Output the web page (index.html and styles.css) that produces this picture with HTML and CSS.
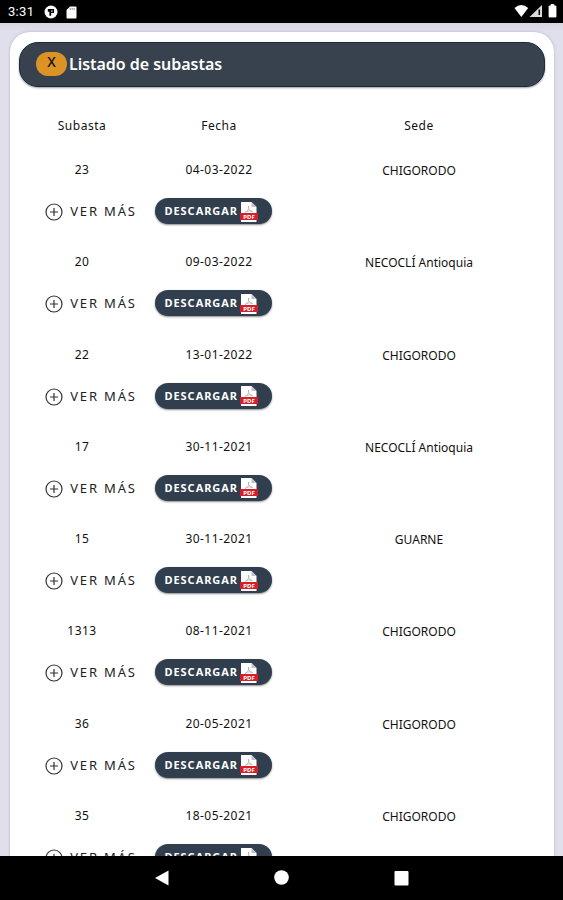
FILE: index.html
```html
<!DOCTYPE html>
<html lang="es">
<head>
<meta charset="utf-8">
<title>Listado de subastas</title>
<link rel="stylesheet" href="styles.css">
</head>
<body>
<header class="status">
  <span class="clock">3:31</span>
  <svg class="app" width="14" height="14" viewBox="0 0 14 14"><circle cx="7" cy="7" r="6.500" fill="#fff"/><path d="M3.800 4H10V8H7.200V10.800H5.400V6.800H3.800Z" fill="#000"/><path d="M7.200 5.400h1.400v1.300H7.200Z" fill="#fff"/></svg>
  <svg class="sd" width="11" height="13" viewBox="0 0 11 13"><path d="M4 0.500H9.500a1 1 0 0 1 1 1V11.500a1 1 0 0 1-1 1H1.500a1 1 0 0 1-1-1V4Z" fill="#fff"/><path d="M4.200 2v2M6.200 2v2M8.200 2v2" stroke="#777" stroke-width=".8"/></svg>
  <svg class="signals" width="44" height="14" viewBox="0 0 44 14"><path d="M0.500 4Q7.300-2 14.200 4L7.300 13Z" fill="#fff"/><path d="M15.500 13L28 1V13Z" fill="#ddd"/><path d="M25.300 5.500V11" stroke="#000" stroke-width="1.500"/><path d="M35 2H37V0.500H40V2H42V13H35Z" fill="#fff" stroke="#fff" stroke-width=".8" stroke-linejoin="round"/></svg>
</header>
<main class="page">
  <section class="card">
    <div class="bar"><button class="close">X</button><h1>Listado de subastas</h1></div>
    <div class="grid heads"><span>Subasta</span><span>Fecha</span><span>Sede</span></div>
    <div id="rows"></div>
  </section>
</main>
<nav class="nav">
  <svg width="563" height="44" viewBox="0 0 563 44"><path d="M155 22L168.500 14.500V29.500Z" fill="#fff"/><circle cx="281.500" cy="21.500" r="7.300" fill="#fff"/><rect x="394.500" y="15" width="14" height="14.500" rx="1" fill="#fff"/></svg>
</nav>
<template id="row">
  <article class="row">
    <div class="grid"><span class="num"></span><span class="date"></span><span class="place"></span></div>
    <div class="grid actions">
      <a class="more"><svg width="18" height="18" viewBox="0 0 18 18" fill="none" stroke="#333" stroke-width="1.200"><circle cx="9" cy="9" r="8"/><path d="M9 5V13M5 9H13"/></svg>VER MÁS</a>
      <a class="download">DESCARGAR<svg width="18" height="20" viewBox="0 0 18 20"><path d="M1 0H11.500L16.500 5V20H1Z" fill="#fff"/><path d="M11.500 0V5H16.500Z" fill="#bcc3ca"/><path d="M8.500 4C9.500 7 7 10 5 10.500C7 8.500 11 8.500 12.500 9.500C10 9.500 8 7 8.500 4Z" fill="none" stroke="#aaa" stroke-width=".7"/><rect y="11" width="18" height="7" fill="#d5202a"/><text x="9" y="16.800" class="pdf">PDF</text></svg></a>
    </div>
  </article>
</template>
<script src="app.js"></script>
</body>
</html>
```
FILE: styles.css
```css
* { box-sizing: border-box; }
body { margin: 0; width: 563px; height: 900px; overflow: hidden; display: flex; flex-direction: column; background: #e0e0ed; font-family: "Noto Sans", sans-serif; color: #111; }
.status { height: 23px; flex: none; background: #000; display: flex; align-items: center; padding: 1px 6px 0 8px; color: #fff; }
.clock { font: 13px/20px Roboto, sans-serif; width: 36px; letter-spacing: .3px; }
.sd { margin-left: 8px; }
.signals { margin-left: auto; margin-right: -1px; margin-top: -2px; }
.page { flex: 1; min-height: 0; padding: 9px 9px 0 10px; overflow: hidden; background: linear-gradient(#d6d6e1, #e0e0ed 9px); }
.card { height: 960px; background: #fff; border-radius: 20px; box-shadow: 0 0 3px rgba(70, 70, 100, .3); padding: 10px 9px 0; }
.bar { height: 45px; border-radius: 19px; background: #38424e; border: 1px solid #172c40; display: flex; align-items: center; padding: 0 0 2px 16px; box-shadow: 0 1px 2px rgba(0, 0, 0, .4); }
.close { width: 31px; height: 24px; border: 0; border-radius: 12px; background: #dc9325; padding: 0 0 4px; font: 500 14px/20px "Noto Sans", sans-serif; color: #111; }
h1 { margin: 0 0 0 2px; font-size: 16px; line-height: 22px; font-weight: 600; letter-spacing: -.03px; color: #fff; white-space: nowrap; }
.grid { display: grid; grid-template-columns: 136px 138px 262px; margin-left: -5px; text-align: center; justify-items: center; white-space: nowrap; font-size: 12px; line-height: 18px; }
.heads { margin-top: 30px; letter-spacing: .5px; }
.row { height: 92.300px; padding-top: 26px; }
.num, .date { letter-spacing: .45px; }
.place { padding-top: 1px; }
.actions { margin-top: 17px; }
.more { display: flex; align-items: center; gap: 7px; height: 28px; font-size: 13px; letter-spacing: 1.850px; margin-left: 18px; color: #222; }
.more svg { margin-top: 2px; }
.download { display: flex; align-items: center; width: 117px; height: 26px; margin-left: -12px; margin-top: 1px; padding-left: 10px; border-radius: 13px; background: #303e4e; color: #fff; font-size: 11px; font-weight: 700; letter-spacing: .950px; box-shadow: 0 1px 2px rgba(0, 0, 0, .45); }
.download svg { margin-left: 2px; margin-top: 1px; flex: none; }
.pdf { font: 700 6px "Noto Sans", sans-serif; letter-spacing: 0; fill: #fff; text-anchor: middle; }
.nav { flex: none; height: 44px; background: #000; }
.nav svg { display: block; }
```
FILE: app.js
```js
const auctions = [
  ["23", "04-03-2022", "CHIGORODO"],
  ["20", "09-03-2022", "NECOCLÍ Antioquia"],
  ["22", "13-01-2022", "CHIGORODO"],
  ["17", "30-11-2021", "NECOCLÍ Antioquia"],
  ["15", "30-11-2021", "GUARNE"],
  ["1313", "08-11-2021", "CHIGORODO"],
  ["36", "20-05-2021", "CHIGORODO"],
  ["35", "18-05-2021", "CHIGORODO"]
];
const rows = document.getElementById("rows");
const template = document.getElementById("row");
for (const [num, date, place] of auctions) {
  const row = template.content.cloneNode(true);
  row.querySelector(".num").textContent = num;
  row.querySelector(".date").textContent = date;
  row.querySelector(".place").textContent = place;
  rows.append(row);
}
```
